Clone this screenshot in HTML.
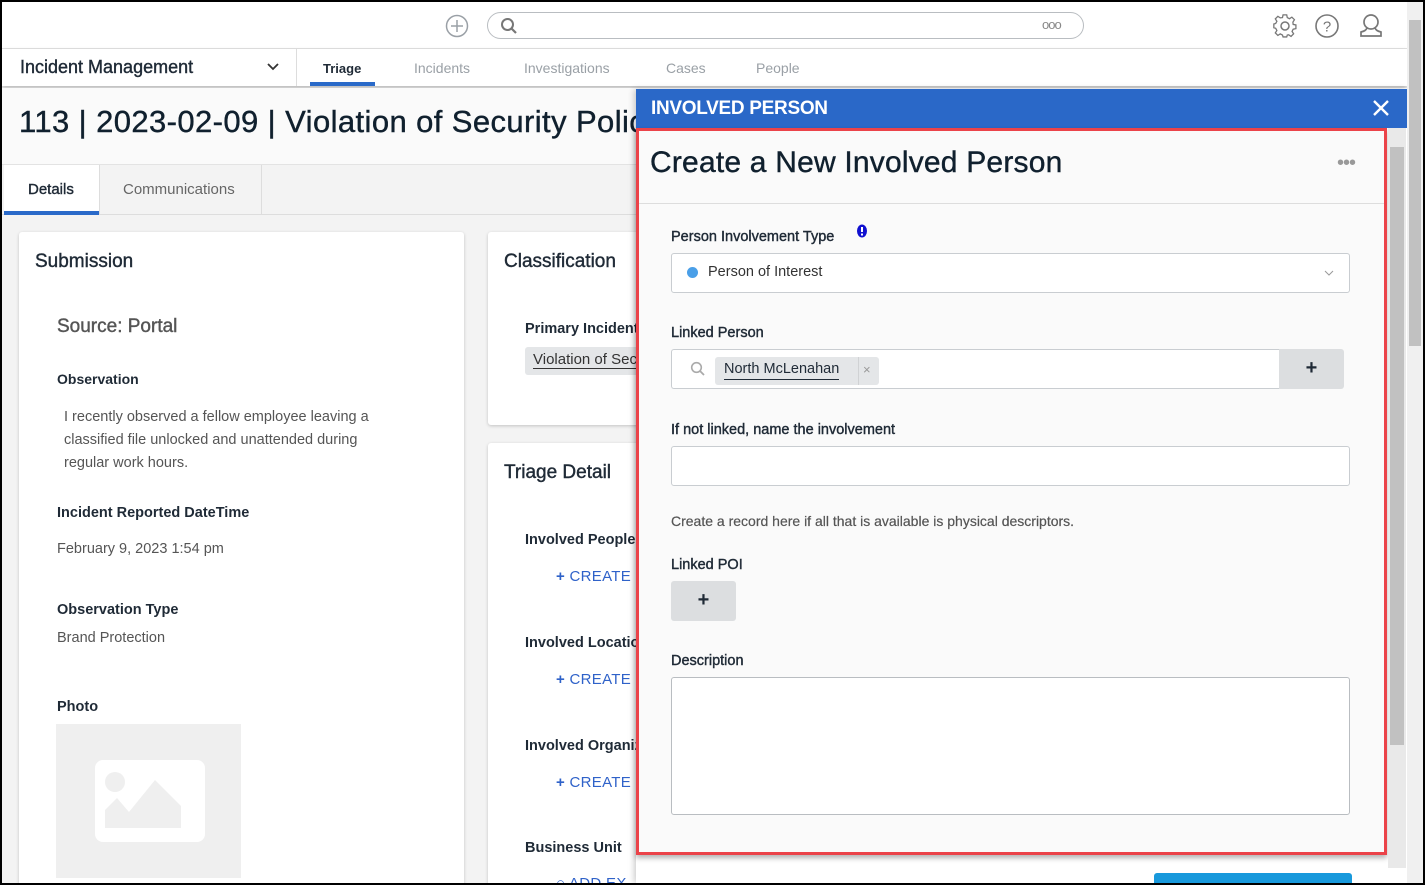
<!DOCTYPE html>
<html><head><meta charset="utf-8"><style>
*{box-sizing:border-box;margin:0;padding:0}
html,body{width:1425px;height:885px;overflow:hidden}
body{font-family:"Liberation Sans",sans-serif;background:#000;position:relative;color:#1f2a36}
.frame{position:absolute;left:2px;top:2px;width:1421px;height:881px;background:#f3f3f3;overflow:hidden}
.abs{position:absolute}
.top{left:0;top:0;width:1405px;height:47px;background:#fff;border-bottom:1px solid #e2e2e2}
.nav{left:0;top:47px;width:1405px;height:37px;background:#fff;box-shadow:0 2px 4px rgba(0,0,0,.25)}
.navt{position:absolute;top:11px;font-size:14px;color:#9aa0a6}
.lbl{position:absolute;font-size:15px;font-weight:bold;color:#1f2a36}
.card{position:absolute;background:#fff;box-shadow:0 1px 3px rgba(0,0,0,.2);border-radius:3px}
.create{position:absolute;color:#2f62c9;font-size:15px;letter-spacing:.3px}
.inp{position:absolute;background:#fff;border:1px solid #c9cdd1;border-radius:3px}
.med{-webkit-text-stroke:.4px currentColor}
</style></head><body><div class="frame">
<div class="abs top">
 <svg class="abs" style="left:443px;top:12px" width="24" height="24" viewBox="0 0 24 24"><circle cx="12" cy="12" r="10.5" fill="none" stroke="#9aa0a6" stroke-width="1.5"/><path d="M12 6v12M6 12h12" stroke="#9aa0a6" stroke-width="1.5"/></svg>
 <div class="abs" style="left:485px;top:10px;width:597px;height:27px;border:1px solid #b9bdc1;border-radius:14px"></div>
 <svg class="abs" style="left:498px;top:15px" width="18" height="18" viewBox="0 0 18 18"><circle cx="7.5" cy="7.5" r="5.5" fill="none" stroke="#777" stroke-width="2"/><path d="M11.5 11.5l4.5 4.5" stroke="#777" stroke-width="2.2"/></svg>
 <div class="abs" style="left:1040px;top:15px;font-size:13px;color:#888;letter-spacing:-1px">ooo</div>
 <svg class="abs" style="left:1270px;top:11px" width="26" height="26" viewBox="0 0 26 26"><circle cx="13" cy="13" r="4" fill="none" stroke="#777" stroke-width="1.5"/><path d="M11 2h4l.6 3 2.4 1.2 2.6-1.7 2.8 2.8-1.7 2.6L22 12.4l3 .6v4l-3 .6-1.2 2.4 1.7 2.6-2.8 2.8-2.6-1.7L15.6 24 15 26h-4l-.6-2-2.4-1.3-2.6 1.7-2.8-2.8 1.7-2.6L3 16.6 1 16v-4l2-.6 1.3-2.4-1.7-2.6 2.8-2.8 2.6 1.7L10.4 5z" transform="scale(.92) translate(1 0)" fill="none" stroke="#777" stroke-width="1.4"/></svg>
 <svg class="abs" style="left:1312px;top:11px" width="26" height="26" viewBox="0 0 26 26"><circle cx="13" cy="13" r="11" fill="none" stroke="#777" stroke-width="1.6"/><text x="13" y="18.5" font-size="15" text-anchor="middle" fill="#777" font-family="Liberation Sans">?</text></svg>
 <svg class="abs" style="left:1355px;top:10px" width="28" height="28" viewBox="0 0 28 28"><circle cx="14" cy="10" r="7" fill="none" stroke="#777" stroke-width="1.7"/><path d="M10 16c-1 2-2 3-6 4v4h20v-4c-4-1-5-2-6-4" fill="none" stroke="#777" stroke-width="1.7"/></svg>
</div>
<div class="abs nav">
 <div class="abs med" style="left:18px;top:8px;font-size:18px;color:#1f2a36">Incident Management</div>
 <svg class="abs" style="left:265px;top:13px" width="12" height="10" viewBox="0 0 12 10"><path d="M1 2l5 5 5-5" fill="none" stroke="#333" stroke-width="1.8"/></svg>
 <div class="abs" style="left:294px;top:0;width:1px;height:37px;background:#ddd"></div>
 <div class="navt" style="left:321px;color:#1f2a36;font-weight:bold;font-size:13px;top:12px">Triage</div>
 <div class="abs" style="left:308px;top:33px;width:65px;height:4px;background:#2a6ac9"></div>
 <div class="navt" style="left:412px">Incidents</div>
 <div class="navt" style="left:522px">Investigations</div>
 <div class="navt" style="left:664px">Cases</div>
 <div class="navt" style="left:754px">People</div>
</div>
<div class="abs" style="left:0;top:86px;width:1405px;height:77px;background:#fafafa;border-bottom:1px solid #e3e3e3"></div>
<div class="abs med" style="left:17px;top:102px;font-size:31px;color:#10202e;letter-spacing:.4px;white-space:nowrap">113 | 2023-02-09 | Violation of Security Policy</div>
<div class="abs" style="left:0;top:163px;width:1405px;height:50px;background:#f3f3f3;border-bottom:1px solid #ddd"></div>
<div class="abs" style="left:2px;top:163px;width:96px;height:50px;background:#fff;border-right:1px solid #ddd"></div>
<div class="abs med" style="left:26px;top:179px;font-size:15px;color:#1f2a36">Details</div>
<div class="abs" style="left:2px;top:209px;width:95px;height:4px;background:#2a6ac9"></div>
<div class="abs" style="left:98px;top:163px;width:162px;height:50px;border-right:1px solid #ddd"></div>
<div class="abs" style="left:121px;top:179px;font-size:15px;color:#666">Communications</div>

<div class="card" style="left:17px;top:230px;width:445px;height:660px"></div>
<div class="abs med" style="left:33px;top:249px;font-size:19px;color:#1f2a36">Submission</div>
<div class="abs med" style="left:55px;top:314px;font-size:19px;color:#555">Source: Portal</div>
<div class="lbl" style="left:55px;top:369px;font-size:14px">Observation</div>
<div class="abs" style="left:62px;top:404px;font-size:14.5px;color:#555;line-height:23px;width:335px">I recently observed a fellow employee leaving a classified file unlocked and unattended during regular work hours.</div>
<div class="lbl" style="left:55px;top:503px;font-size:14.5px">Incident Reported DateTime</div>
<div class="abs" style="left:55px;top:539px;font-size:14.5px;color:#555">February 9, 2023 1:54 pm</div>
<div class="lbl" style="left:55px;top:600px;font-size:14.5px">Observation Type</div>
<div class="abs" style="left:55px;top:628px;font-size:14.5px;color:#555">Brand Protection</div>
<div class="lbl" style="left:55px;top:697px;font-size:14.5px">Photo</div>
<div class="abs" style="left:54px;top:722px;width:185px;height:154px;background:#efefef"></div>
<svg class="abs" style="left:93px;top:758px" width="110" height="82" viewBox="0 0 110 82"><rect width="110" height="82" rx="8" fill="#fff"/><circle cx="20" cy="22" r="10" fill="#efefef"/><path d="M10 68V50l12-12 12 14 26-32 26 26v22z" fill="#efefef"/></svg>

<div class="card" style="left:486px;top:230px;width:200px;height:193px"></div>
<div class="abs med" style="left:502px;top:249px;font-size:19px;color:#1f2a36">Classification</div>
<div class="lbl" style="left:523px;top:319px;font-size:14.5px">Primary Incident</div>
<div class="abs" style="left:523px;top:345px;width:140px;height:28px;background:#e4e6e8;border-radius:3px"></div>
<div class="abs" style="left:531px;top:349px;font-size:15px;color:#333;border-bottom:1px solid #333">Violation of Security</div>
<div class="card" style="left:486px;top:441px;width:200px;height:450px"></div>
<div class="abs med" style="left:502px;top:460px;font-size:19px;color:#1f2a36">Triage Detail</div>
<div class="lbl" style="left:523px;top:530px;font-size:14.5px">Involved People</div>
<div class="create" style="left:554px;top:566px"><b>+</b> CREATE</div>
<div class="lbl" style="left:523px;top:633px;font-size:14.5px">Involved Locations</div>
<div class="create" style="left:554px;top:669px"><b>+</b> CREATE</div>
<div class="lbl" style="left:523px;top:736px;font-size:14.5px">Involved Organizations</div>
<div class="create" style="left:554px;top:772px"><b>+</b> CREATE</div>
<div class="lbl" style="left:523px;top:838px;font-size:14.5px">Business Unit</div>
<div class="create" style="left:554px;top:873px">○ ADD EX</div>

<div class="abs" style="left:634px;top:87px;width:771px;height:794px;background:#fff;box-shadow:-2px 0 6px rgba(0,0,0,.2)"></div>
<div class="abs" style="left:634px;top:87px;width:771px;height:39px;background:#2a68c8"></div>
<div class="abs" style="left:649px;top:96px;font-size:19px;font-weight:bold;color:#fff;letter-spacing:-.3px">INVOLVED PERSON</div>
<svg class="abs" style="left:1370px;top:97px" width="18" height="18" viewBox="0 0 18 18"><path d="M2 2l14 14M16 2L2 16" stroke="#fff" stroke-width="2.4"/></svg>
<div class="abs" style="left:634px;top:126px;width:751px;height:727px;border:3px solid #eb4349;background:#fafafa;box-shadow:0 3px 5px rgba(0,0,0,.3)"></div>
<div class="abs" style="left:1386px;top:126px;width:18px;height:740px;background:#e9e9e9"></div>
<div class="abs" style="left:1388px;top:145px;width:14px;height:598px;background:#c1c1c1"></div>
<div class="abs" style="left:1405px;top:0;width:16px;height:881px;background:#f0f0f0"></div>
<div class="abs" style="left:1407px;top:18px;width:12px;height:326px;background:#c1c1c1"></div>
<div class="abs med" style="left:648px;top:144px;font-size:30px;color:#10202e;letter-spacing:.2px">Create a New Involved Person</div>
<div class="abs" style="left:1335px;top:150px;font-size:20px;color:#999;letter-spacing:-1px">•••</div>
<div class="abs" style="left:637px;top:201px;width:745px;height:1px;background:#ddd"></div>

<div class="lbl med" style="left:669px;top:227px;font-size:14.5px;font-weight:normal">Person Involvement Type</div>
<svg class="abs" style="left:854px;top:222px" width="12" height="14" viewBox="0 0 12 14"><ellipse cx="6" cy="7" rx="5" ry="6.5" fill="#1010d0"/><rect x="5" y="3" width="2" height="5" fill="#fff"/><rect x="5" y="9.5" width="2" height="2" fill="#fff"/></svg>
<div class="inp" style="left:669px;top:251px;width:679px;height:40px"></div>
<div class="abs" style="left:685px;top:265px;width:11px;height:11px;border-radius:50%;background:#4a9fe8"></div>
<div class="abs" style="left:706px;top:262px;font-size:14.5px;color:#333">Person of Interest</div>
<svg class="abs" style="left:1322px;top:267px" width="10" height="8" viewBox="0 0 10 8"><path d="M1 2l4 4 4-4" fill="none" stroke="#999" stroke-width="1"/></svg>

<div class="lbl med" style="left:669px;top:323px;font-size:14.5px;font-weight:normal">Linked Person</div>
<div class="inp" style="left:669px;top:347px;width:610px;height:40px;border-right:none;border-radius:3px 0 0 3px"></div>
<div class="abs" style="left:1277px;top:347px;width:65px;height:40px;background:#dcdee0;border-radius:0 3px 3px 0;text-align:center;font-size:20px;font-weight:bold;line-height:38px;color:#1f2a36">+</div>
<svg class="abs" style="left:688px;top:359px" width="16" height="16" viewBox="0 0 16 16"><circle cx="6.5" cy="6.5" r="4.8" fill="none" stroke="#aaa" stroke-width="1.6"/><path d="M10 10l4 4" stroke="#aaa" stroke-width="1.8"/></svg>
<div class="abs" style="left:713px;top:355px;width:164px;height:28px;background:#e4e6e8;border-radius:3px"></div>
<div class="abs" style="left:856px;top:355px;width:1px;height:28px;background:#d0d2d4"></div>
<div class="abs" style="left:722px;top:358px;font-size:14.5px;color:#1f2a36;border-bottom:1px solid #1f2a36;line-height:19px">North McLenahan</div>
<div class="abs" style="left:861px;top:360px;font-size:13px;color:#999">×</div>

<div class="lbl med" style="left:669px;top:420px;font-size:14.5px;font-weight:normal">If not linked, name the involvement</div>
<div class="inp" style="left:669px;top:444px;width:679px;height:40px"></div>
<div class="abs" style="left:669px;top:511px;font-size:14px;color:#555;-webkit-text-stroke:.2px #555">Create a record here if all that is available is physical descriptors.</div>
<div class="lbl med" style="left:669px;top:555px;font-size:14.5px;font-weight:normal">Linked POI</div>
<div class="abs" style="left:669px;top:579px;width:65px;height:40px;background:#dcdee0;border-radius:3px;text-align:center;font-size:20px;font-weight:bold;line-height:38px;color:#1f2a36">+</div>
<div class="lbl med" style="left:669px;top:651px;font-size:14.5px;font-weight:normal">Description</div>
<div class="inp" style="left:669px;top:675px;width:679px;height:138px;border-color:#b9bdc1"></div>
<div class="abs" style="left:1152px;top:871px;width:198px;height:10px;background:#1899dc;border-radius:3px 3px 0 0"></div>
</div></body></html>
